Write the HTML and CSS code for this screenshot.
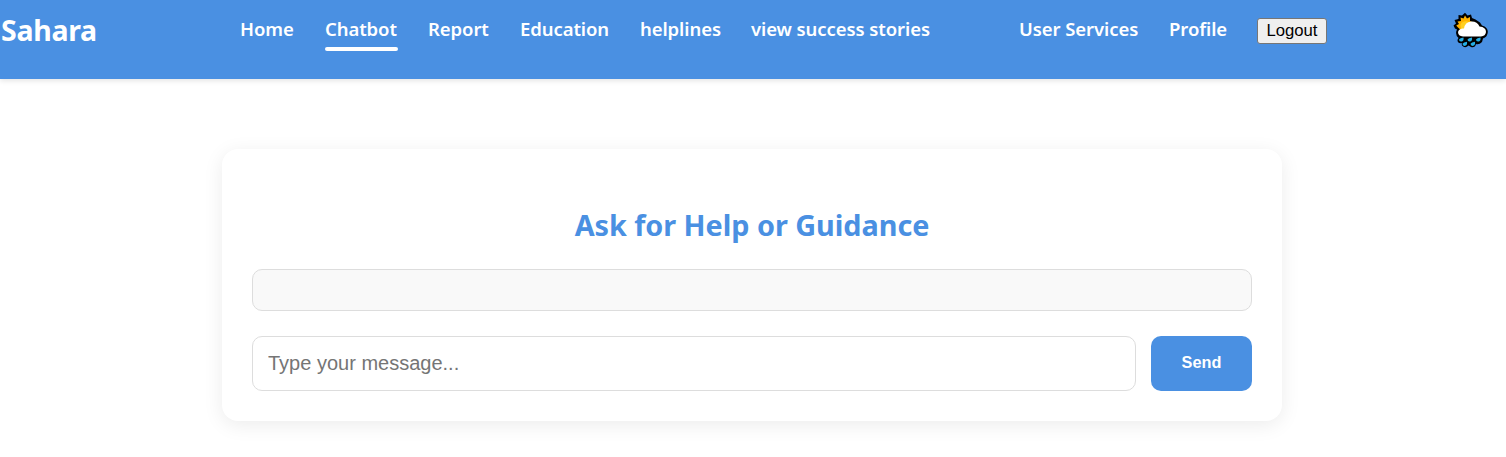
FILE: index.html
```
<!DOCTYPE html>
<html lang="en">
<head>
<meta charset="utf-8">
<title>Sahara</title>
<link rel="stylesheet" href="styles.css">
</head>
<body>
<header class="navbar">
  <div class="logo">Sahara</div>
  <nav class="links">
    <a class="w-home">Home</a>
    <a class="w-chatbot active">Chatbot</a>
    <a class="w-report">Report</a>
    <a class="w-education">Education</a>
    <a class="w-helplines">helplines</a>
    <a class="w-stories">view success stories</a>
  </nav>
  <nav class="links account">
    <a class="w-services">User Services</a>
    <a class="w-profile">Profile</a>
    <button class="logout">Logout</button>
  </nav>
  <svg class="weather" viewBox="0 0 36 36" width="36" height="36">
    <path d="M2 16.500 .5 13.500 3 11.500 1.500 8 5.500 7 5.500 3 9 3.500 12 .8 14.500 3.500 18 2.500 19 6 22.500 7.500 27 10.500 29 13.500Q35 15.500 34.800 20 34.500 25 30 26.500L29 30Q26 33 23 32 22 36 18 35 16 33.500 15.500 33.500 12 37 9 33.500 8.500 32 9 31 5 32 4.500 28.500 4.500 27 5.500 26 1.500 22 4 17.500Z" fill="#000"/>
    <path d="M5 15.500 3.200 13.500 6 12 4.500 9.500 8 9 7.500 5.500 10.500 6.500 12 3.500 14 6.500 17 5 17 9 19 10 9 19Z" fill="#ffb300"/>
    <path d="M8 16Q6 11 11 9.500 15 8.500 17 11L10 18Z" fill="#ffd021"/>
    <path d="M10 24.500Q5 24 5 20 6 16 11 16.500 12 10 18 9.500 24 9 26.500 14.500 33 15 33 20 32.500 24 28 24.500Z" fill="#fff"/>
    <g fill="#24afe5"><path id="drop" d="M10.500 25.500Q11 29 8.800 29.500 6 30 6 27.500 7 26 10.500 25.500Z"/><use href="#drop" x="8.500"/><use href="#drop" x="17"/><use href="#drop" x="3.500" y="4.300"/><use href="#drop" x="11.500" y="4.300"/></g>
  </svg>
</header>
<main class="card">
  <h2 class="title">Ask for Help or Guidance</h2>
  <div class="chat-box"></div>
  <form class="composer">
    <input class="message" type="text" placeholder="Type your message...">
    <button class="send" type="button">Send</button>
  </form>
</main>
</body>
</html>
```
FILE: styles.css
```
* { box-sizing: border-box; }
body { margin: 0; min-height: 100vh; background: #fff; font-family: "Noto Sans", sans-serif; }
.navbar { display: flex; align-items: flex-start; height: 79px; background: #4a90e2; color: #fff; box-shadow: 0 2px 5px rgba(0,0,0,.1); }
.logo { width: 240px; padding: 10px 0 0 1px; font-size: 28.500px; line-height: 40px; font-weight: 700; letter-spacing: -.3px; }
.links { display: flex; gap: 30px; padding-top: 15px; font-size: 18.500px; font-weight: 600; line-height: 27px; white-space: nowrap; }
.links a { display: flex; flex-direction: column; height: 36px; letter-spacing: -.08px; }
.links .active::after { content: ""; height: 4px; margin-top: auto; background: #fff; border-radius: 2px; }
.w-home { width: 55px; }
.w-chatbot { width: 73px; }
.w-report { width: 62px; }
.w-education { width: 90px; }
.w-helplines { width: 81px; }
.w-stories { width: 179px; }
.account { margin-left: 89px; }
.w-services { width: 120px; }
.w-profile { width: 58px; }
.logout { width: 70px; height: 26px; margin-top: 3px; padding: 0; border: 1px solid #767676; border-radius: 3px; background: #efefef; color: #000; font: 16.700px/22px "Liberation Sans", Arial, sans-serif; }
.weather { margin: 12px 0 0 126px; }
.card { width: 1060px; height: 272px; margin: 70px 0 0 222px; padding: 55px 30px 30px; border-radius: 16px; background: #fff; box-shadow: 0 4px 20px rgba(0,0,0,.08); }
.title { margin: 0; height: 65px; color: #4a90e2; font-size: 28.800px; line-height: 41px; font-weight: 700; text-align: center; letter-spacing: -.03px; }
.chat-box { height: 42px; border: 1px solid #ddd; border-radius: 10px; background: #f9f9f9; }
.composer { display: flex; gap: 15px; margin-top: 25px; }
.message { width: 884px; height: 55px; padding: 0 15px; border: 1px solid #ddd; border-radius: 10px; background: #fff; font: 20px "Liberation Sans", Arial, sans-serif; }
.message::placeholder { color: #757575; }
.send { width: 101px; height: 55px; padding: 0 0 2px; border: 0; border-radius: 10px; background: #4a90e2; color: #fff; font: 700 16.300px "Liberation Sans", Arial, sans-serif; }
```
